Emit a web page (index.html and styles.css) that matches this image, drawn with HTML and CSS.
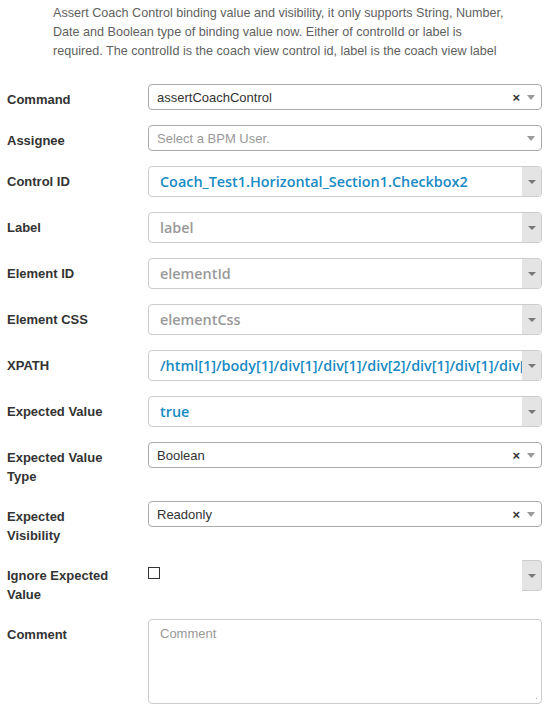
FILE: index.html
```html
<!DOCTYPE html>
<html>
<head>
<meta charset="utf-8">
<link rel="stylesheet" href="styles.css">
</head>
<body>
<div class="page">
  <p class="desc">Assert Coach Control binding value and visibility, it only supports String, Number, Date and Boolean type of binding value now. Either of controlId or label is required. The controlId is the coach view control id, label is the coach view label</p>
  <div class="form">
    <div class="row">
      <div class="lbl">Command</div>
      <div class="sel"><span class="val">assertCoachControl</span><span class="clear">×</span><span class="caret"></span></div>
    </div>
    <div class="row">
      <div class="lbl">Assignee</div>
      <div class="sel"><span class="val ph">Select a BPM User.</span><span class="caret"></span></div>
    </div>
    <div class="row">
      <div class="lbl">Control ID</div>
      <div class="combo"><span class="ctext">Coach_Test1.Horizontal_Section1.Checkbox2</span><span class="addon"><span class="tri"></span></span></div>
    </div>
    <div class="row">
      <div class="lbl">Label</div>
      <div class="combo"><span class="ctext ph">label</span><span class="addon"><span class="tri"></span></span></div>
    </div>
    <div class="row">
      <div class="lbl">Element ID</div>
      <div class="combo"><span class="ctext ph">elementId</span><span class="addon"><span class="tri"></span></span></div>
    </div>
    <div class="row">
      <div class="lbl">Element CSS</div>
      <div class="combo"><span class="ctext ph">elementCss</span><span class="addon"><span class="tri"></span></span></div>
    </div>
    <div class="row">
      <div class="lbl">XPATH</div>
      <div class="combo"><span class="ctext">/html[1]/body[1]/div[1]/div[1]/div[2]/div[1]/div[1]/div[1]</span><span class="addon"><span class="tri"></span></span></div>
    </div>
    <div class="row">
      <div class="lbl">Expected Value</div>
      <div class="combo"><span class="ctext">true</span><span class="addon"><span class="tri"></span></span></div>
    </div>
    <div class="row">
      <div class="lbl">Expected Value Type</div>
      <div class="sel"><span class="val">Boolean</span><span class="clear">×</span><span class="caret"></span></div>
    </div>
    <div class="row">
      <div class="lbl">Expected Visibility</div>
      <div class="sel"><span class="val">Readonly</span><span class="clear">×</span><span class="caret"></span></div>
    </div>
    <div class="row">
      <div class="lbl">Ignore Expected Value</div>
      <div class="ignore"><span class="check"></span><span class="addon lone"><span class="tri"></span></span></div>
    </div>
    <div class="row">
      <div class="lbl">Comment</div>
      <div class="area"><span class="ph">Comment</span><span class="grip"></span></div>
    </div>
  </div>
</div>
</body>
</html>
```

FILE: styles.css
```css
html, body {
  margin: 0;
  padding: 0;
  background: #fff;
}

.page {
  padding: 4px 8px 0 7px;
  font-family: "Liberation Sans", Arial, sans-serif;
}

.desc {
  margin: 0 0 23px 46px;
  width: 458px;
  font-size: 12.6px;
  line-height: 19px;
  color: #5f5f5f;
}

.row {
  display: grid;
  grid-template-columns: 141px 394px;
  margin-bottom: 15px;
}

.lbl {
  padding-top: 6px;
  width: 106px;
  font-size: 13px;
  font-weight: bold;
  line-height: 19px;
  color: #333;
}

.sel {
  box-sizing: border-box;
  height: 26px;
  border: 1px solid #aaa;
  border-radius: 4px;
  display: flex;
  align-items: center;
  padding: 0 6px 0 8px;
  font-size: 13px;
  color: #333;
}

.sel .val {
  flex: 1;
  white-space: nowrap;
  overflow: hidden;
}

.ph {
  color: #999;
}

.clear {
  font-weight: bold;
  font-size: 13px;
  color: #333;
  margin-right: 7px;
  line-height: 1;
}

.caret {
  width: 0;
  height: 0;
  border-left: 4px solid transparent;
  border-right: 4px solid transparent;
  border-top: 5px solid #999;
}

.combo {
  box-sizing: border-box;
  height: 31px;
  border: 1px solid #ccc;
  border-radius: 4px;
  display: flex;
  overflow: hidden;
}

.ctext {
  flex: 1;
  padding-left: 11px;
  font-family: "Open Sans", "DejaVu Sans", sans-serif;
  font-weight: 600;
  font-size: 14.4px;
  line-height: 29px;
  color: #178ac4;
  white-space: nowrap;
  overflow: hidden;
}

.ctext.ph {
  color: #999;
}

.addon {
  width: 19px;
  background: #e4e4e4;
  display: flex;
  align-items: center;
  justify-content: center;
}

.tri {
  width: 0;
  height: 0;
  border-left: 4px solid transparent;
  border-right: 4px solid transparent;
  border-top: 4px solid #777;
}

.ignore {
  display: flex;
  justify-content: space-between;
  align-items: flex-start;
}

.check {
  box-sizing: border-box;
  width: 12px;
  height: 12px;
  border: 1px solid #333;
  margin-top: 7px;
}

.addon.lone {
  height: 31px;
  border: 1px solid #ccc;
  border-left: none;
  border-radius: 0 4px 4px 0;
  box-sizing: border-box;
  width: 20px;
}

.area {
  box-sizing: border-box;
  height: 85px;
  border: 1px solid #ccc;
  border-radius: 4px;
  padding: 6px 11px;
  font-size: 13px;
  line-height: 16px;
  position: relative;
}

.grip {
  position: absolute;
  right: 2px;
  bottom: 2px;
  width: 7px;
  height: 7px;
  background:
    radial-gradient(circle, #aaa 1px, transparent 1px) 0 0 / 3px 3px;
  clip-path: polygon(100% 0, 100% 100%, 0 100%);
}
```
